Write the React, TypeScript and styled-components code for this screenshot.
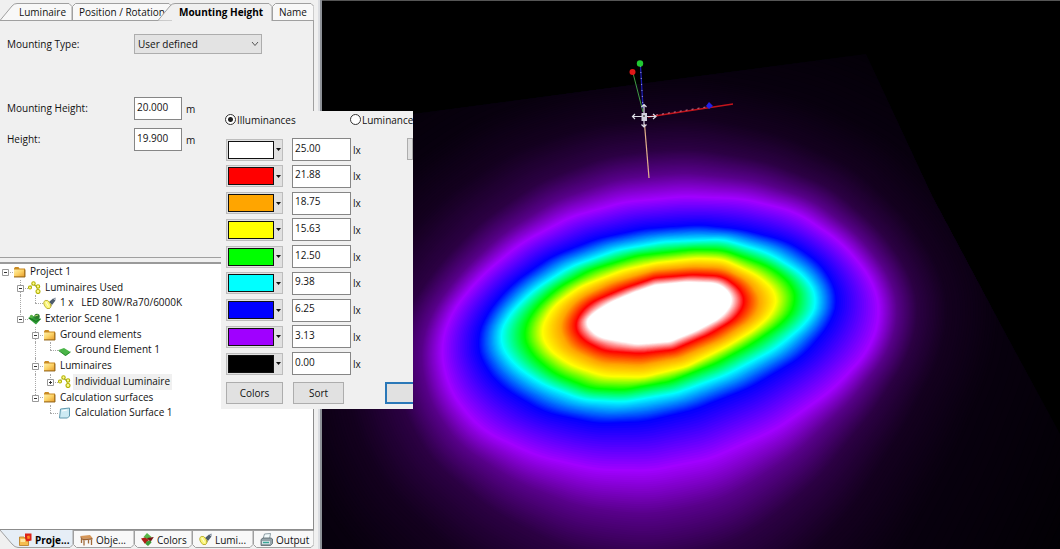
import React, { useId } from "react";
import styled, { createGlobalStyle } from "styled-components";

const GlobalStyle = createGlobalStyle`
  *, *::before, *::after { box-sizing: border-box; }
  body { margin: 0; background: #f0f0f0; }
  body, button, input, select {
    font-family: "Open Sans", "Noto Sans", sans-serif;
    font-size: 10px;
    line-height: 16px;
    color: #111;
  }
`;

const Workspace = styled.main`
  position: relative;
  display: flex;
  height: 100vh;
  min-height: 520px;
  overflow: hidden;
  background: #f0f0f0;
`;

const SidePanel = styled.aside`
  display: flex;
  flex-direction: column;
  flex: none;
  width: 322px;
  padding-right: 6px;
  border-right: 2px solid #8c9096;
  box-shadow: inset -2px 0 0 #dcdee2;
`;

/* ---------- tabs ---------- */

const TabStrip = styled.div<{ $bottom?: boolean }>`
  display: flex;
  flex: none;
  height: ${(p) => (p.$bottom ? 19 : 18)}px;
  margin-top: ${(p) => (p.$bottom ? 0 : 3)}px;
  overflow: hidden;
`;

const TabButton = styled.button<{ $width: number; $active?: boolean; $overlap?: boolean; $pad: number }>`
  position: relative;
  display: flex;
  align-items: center;
  flex: none;
  width: ${(p) => p.$width}px;
  height: 100%;
  margin: 0 ${(p) => (p.$overlap ? -14 : 0)}px 0 0;
  padding: 0 0 0 ${(p) => p.$pad}px;
  border: 0;
  background: none;
  white-space: nowrap;
  font-weight: ${(p) => (p.$active ? 700 : 400)};
  color: ${(p) => (p.$active ? "#000" : "#111")};
`;

const TabShape = styled.svg`
  position: absolute;
  inset: 0;
  width: 100%;
  height: 100%;
`;

const TabLabel = styled.span`
  position: relative;
  display: flex;
  align-items: center;
  gap: 3px;
`;

type TabProps = {
  label: string;
  width: number;
  pad: number;
  active?: boolean;
  slanted?: boolean;
  overlap?: boolean;
  bottom?: boolean;
  icon?: React.ReactNode;
};

function Tab({ label, width: w, pad, active, slanted, overlap, bottom, icon }: TabProps) {
  const fill = bottom && active ? "#e6eef6" : active ? "#f0f0f0" : "#f8f8f8";
  const outline = bottom
    ? slanted
      ? `M0 0L12 14Q15 17.500 18 17.500H${w - 3}L${w} 14.500V0`
      : `M0.500 0V14.500L3.500 17.500H${w - 3}L${w} 14.500V0`
    : slanted
      ? `M0 17.500L12 3Q14 0.500 17 0.500H${w - 3}L${w} 3.500V18`
      : `M0.500 18V3.500L3.500 0.500H${w - 3}L${w} 3.500V18`;
  const base = bottom ? `M0 0.500H${w}` : `M0 17.500H${w}`;
  return (
    <TabButton role="tab" aria-selected={!!active} $width={w} $pad={pad} $active={active} $overlap={overlap}>
      <TabShape viewBox={`0 0 ${w} ${bottom ? 19 : 18}`} aria-hidden="true">
        <path d={outline} fill={fill} stroke="#a0a0a0" />
        {!active && <path d={base} stroke="#a0a0a0" />}
      </TabShape>
      <TabLabel>
        {icon}
        {label}
      </TabLabel>
    </TabButton>
  );
}

/* ---------- property form ---------- */

const Properties = styled.form`
  display: grid;
  grid-template-columns: 127px 1fr;
  grid-template-rows: 20px 27px 23px 23px;
  row-gap: 8px;
  align-items: center;
  align-content: start;
  flex: none;
  height: 237px;
  padding: 13px 0 0 7px;
  border-right: 1px solid #a0a0a0;
  border-bottom: 1px solid #a0a0a0;
`;

const Spacer = styled.div`
  grid-column: 1 / -1;
`;

const FieldLabel = styled.label`
  padding-bottom: 2px;
`;

const Field = styled.div`
  display: flex;
  align-items: center;
  gap: 4px;
`;

const NumberBox = styled.input<{ $width: number }>`
  width: ${(p) => p.$width}px;
  height: 23px;
  padding: 0 2px 4px;
  border: 1px solid #868686;
  border-radius: 0;
  background: #fff;
  outline: 0;
`;

const SelectWrap = styled.div`
  position: relative;
  width: 128px;
  height: 20px;
`;

const Select = styled.select`
  appearance: none;
  width: 100%;
  height: 100%;
  padding: 0 20px 0 3px;
  border: 1px solid #adadad;
  border-radius: 0;
  background: #e3e3e3;
`;

const Chevron = styled.svg`
  position: absolute;
  right: 3px;
  top: 7px;
  pointer-events: none;
`;

/* ---------- project tree ---------- */

const TreePane = styled.div`
  flex: 1;
  min-height: 0;
  margin-top: 4px;
  border-top: 2px solid #9a9a9a;
  border-right: 1px solid #8c8c8c;
  border-bottom: 1px solid #8c8c8c;
  background: #fff;
`;

const Tree = styled.ul`
  display: grid;
  grid-auto-rows: 1fr;
  height: 157px;
  margin: 0;
  padding: 0;
  list-style: none;
`;

const TreeRow = styled.li`
  display: flex;
  align-items: stretch;
  white-space: pre;
`;

const Guide = styled.span<{ $kind: string }>`
  position: relative;
  flex: none;
  width: ${(p) => (p.$kind === "line" || p.$kind === "none" ? 15 : 13)}px;

  &::before {
    content: "";
    position: absolute;
    left: 5px;
    top: 0;
    height: ${(p) => (p.$kind === "elbow" ? "50%" : "100%")};
    border-left: 1px dotted ${(p) => (p.$kind === "none" || p.$kind === "root" ? "transparent" : "#a8a8a8")};
  }

  &::after {
    content: "";
    position: absolute;
    left: 5px;
    right: 0;
    top: 50%;
    border-top: 1px dotted ${(p) => (p.$kind === "line" || p.$kind === "none" ? "transparent" : "#a8a8a8")};
  }
`;

const Expander = styled.svg`
  position: absolute;
  z-index: 1;
  left: 2px;
  top: 5px;
`;

const RowIcon = styled.span`
  display: flex;
  align-items: center;
  width: 13px;
  flex: none;
`;

const RowText = styled.span<{ $selected?: boolean }>`
  margin-left: 2px;
  padding: 0 2px;
  line-height: 15px;
  background: ${(p) => (p.$selected ? "#f0f0f0" : "transparent")};
`;

const Folder = () => (
  <svg width="13" height="12" viewBox="0 0 13 12" aria-hidden="true">
    <defs>
      <linearGradient id="folder-face" x1="0" y1="0" x2="1" y2="1">
        <stop offset="0" stopColor="#fff0a8" />
        <stop offset="0.500" stopColor="#fcd367" />
        <stop offset="1" stopColor="#e8a032" />
      </linearGradient>
    </defs>
    <path d="M1 2.500L2 1H5.500L6.500 2.500H12V11H1Z" fill="#c98a22" />
    <path d="M1 3.500H11V10.500H1Z" fill="url(#folder-face)" />
    <path d="M1 11H12V3.500" fill="none" stroke="#8f6218" strokeWidth=".9" />
  </svg>
);

const Lamps = () => (
  <svg width="13" height="13" viewBox="0 0 13 13" aria-hidden="true" fill="#fdfd8c" stroke="#b3b000" strokeWidth="1.100">
    <path d="M2 6L5 3L9 6L10 10" fill="none" stroke="#8f9640" strokeDasharray="2 1" />
    <circle cx="2" cy="6.500" r="1.500" />
    <circle cx="5.500" cy="2.500" r="1.700" />
    <circle cx="10" cy="5.500" r="1.700" />
    <circle cx="10" cy="10.500" r="2" />
  </svg>
);

const Spotlight = () => (
  <svg width="13" height="13" viewBox="0 0 13 13" aria-hidden="true">
    <path d="M6 5L10 1.500L12.500 3.500L9 8Z" fill="#4e5c6c" />
    <path d="M10 1.500L12.500 0.500L12.800 3Z" fill="#8793a3" />
    <path d="M2 3.500L9 8L6.500 12Z" fill="#8f8a4a" />
    <ellipse cx="4.300" cy="7.500" rx="3" ry="4.500" transform="rotate(-28 4.300 7.500)" fill="#fbf67a" stroke="#b8ac2a" strokeWidth=".8" />
    <path d="M3 5L5.500 9.500" stroke="#fffde0" />
  </svg>
);

const Scene = () => (
  <svg width="13" height="12" viewBox="0 0 13 12" aria-hidden="true">
    <path d="M0 5L5 3L13 6L8 11.500Z" fill="#2e9b35" />
    <path d="M1 5L8 8.500L12.500 6" stroke="#146f1c" fill="none" />
    <circle cx="9" cy="3.500" r="2.700" fill="#2c7d2e" />
    <circle cx="3.500" cy="3.500" r="1.700" fill="#58b447" />
    <path d="M7 3L10 2" stroke="#b8d86a" />
  </svg>
);

const Ground = () => (
  <svg width="13" height="12" viewBox="0 0 13 12" aria-hidden="true">
    <path d="M0.500 6L6 4L12.500 8L7.500 12Z" fill="#4bb548" />
    <path d="M0.500 6.500L7.500 11.500L12.500 8" stroke="#2b8a30" fill="none" />
  </svg>
);

const Surface = () => (
  <svg width="13" height="12" viewBox="0 0 13 12" aria-hidden="true">
    <path d="M2.500 2L11.500 1V9L9.500 11H1.500Z" fill="#cdeaf3" stroke="#5f98ad" />
    <path d="M4 4L9 3" stroke="#fff" />
  </svg>
);

const ProjectIcon = () => (
  <svg width="13" height="13" viewBox="0 0 13 13" aria-hidden="true">
    <path d="M0.500 4H5L6 5.500H9.500V12.500H0.500Z" fill="#f5bd4f" stroke="#b5771c" strokeWidth=".8" />
    <path d="M1.500 6H6V9H1.500Z" fill="#ffe6a0" />
    <path d="M6 0.500H12.500V7.500L7.500 8.500L6 5Z" fill="#dc2418" />
    <path d="M8 3L10.500 2.500L11 5.500L8.500 6Z" fill="#ff8a26" />
  </svg>
);

const TableIcon = () => (
  <svg width="13" height="13" viewBox="0 0 13 13" aria-hidden="true">
    <path d="M0.500 3L10 2L12.500 5L3 6Z" fill="#d59658" />
    <path d="M3 6L12.500 5V6.500L3 7.500L0.500 4.500V3Z" fill="#9c5f2c" />
    <path d="M1.500 5V10M4 7.500V12.500M11.500 6.500V12M8.500 7V10.500" stroke="#a06a3a" strokeWidth="1.300" />
  </svg>
);

const ColorsIcon = () => (
  <svg width="13" height="13" viewBox="0 0 13 13" aria-hidden="true">
    <path d="M6 0L10.500 4L7 7L2.500 4Z" fill="#58b848" />
    <path d="M0 5.500L4 4.500L8 7L4 11Z" fill="#b01e17" />
    <path d="M6 5L12.800 4L9.500 9Z" fill="#741612" />
    <path d="M5.500 8.500L9.500 7.500L10.500 9.500L7 13L4.500 11Z" fill="#3d9a38" />
  </svg>
);

const PrinterIcon = () => (
  <svg width="13" height="13" viewBox="0 0 13 13" aria-hidden="true">
    <path d="M4.500 1L10.500 0.500L9.500 6H3Z" fill="#f2fbfc" stroke="#75878f" strokeWidth=".8" />
    <path d="M1 6.500L3 5H11L12.500 6V10.500L10.500 12.500H1Z" fill="#96a4aa" stroke="#56646a" strokeWidth=".8" />
    <path d="M2 8H10V11H2Z" fill="#d7e4e6" />
    <path d="M3 9.500H9" stroke="#3aa697" strokeWidth="1.400" />
  </svg>
);

type Node = { guides: string[]; box?: "+" | "-"; icon: React.ReactNode; text: string; selected?: boolean };

const nodes: Node[] = [
  { guides: ["root"], box: "-", icon: <Folder />, text: "Project 1" },
  { guides: ["none", "tee"], box: "-", icon: <Lamps />, text: "Luminaires Used" },
  { guides: ["none", "line", "elbow"], icon: <Spotlight />, text: "1 x   LED 80W/Ra70/6000K" },
  { guides: ["none", "elbow"], box: "-", icon: <Scene />, text: "Exterior Scene 1" },
  { guides: ["none", "none", "tee"], box: "-", icon: <Folder />, text: "Ground elements" },
  { guides: ["none", "none", "line", "elbow"], icon: <Ground />, text: "Ground Element 1" },
  { guides: ["none", "none", "tee"], box: "-", icon: <Folder />, text: "Luminaires" },
  { guides: ["none", "none", "line", "elbow"], box: "+", icon: <Lamps />, text: "Individual Luminaire", selected: true },
  { guides: ["none", "none", "elbow"], box: "-", icon: <Folder />, text: "Calculation surfaces" },
  { guides: ["none", "none", "none", "elbow"], icon: <Surface />, text: "Calculation Surface 1" },
];

/* ---------- false colour dialog ---------- */

const Dialog = styled.section`
  position: absolute;
  z-index: 2;
  left: 221px;
  top: 111px;
  width: 192px;
  height: 298px;
  padding-left: 5px;
  overflow: hidden;
  background: #f0f0f0;
`;

const RadioRow = styled.div`
  display: grid;
  grid-template-columns: 125px auto;
  height: 17px;
  margin-bottom: 10px;
  white-space: nowrap;
`;

const RadioLabel = styled.label`
  display: flex;
  align-items: center;
  gap: 1px;
`;

const Radio = styled.input`
  appearance: none;
  flex: none;
  width: 11px;
  height: 11px;
  margin: 0 0 0 -1px;
  border: 1px solid #333;
  border-radius: 50%;
  background: #fff;

  &:checked {
    background: radial-gradient(circle, #222 0 2px, #fff 3px);
  }
`;

const ScaleArea = styled.div`
  display: flex;
  justify-content: space-between;
`;

const ScaleList = styled.div`
  display: flex;
  flex-direction: column;
  justify-content: space-between;
  height: 237px;
`;

const ScaleRow = styled.div`
  display: flex;
  align-items: center;
`;

const SwatchButton = styled.button`
  display: flex;
  align-items: center;
  gap: 2px;
  width: 57px;
  height: 22px;
  margin-right: 9px;
  padding: 1px;
  border: 1px solid #bdbdbd;
  background: #e1e1e1;
`;

const Swatch = styled.span<{ $color: string }>`
  width: 46px;
  height: 18px;
  border: 1px solid #111;
  background: ${(p) => p.$color};
`;

const Unit = styled.span`
  margin-left: 2px;
`;

const PushButton = styled.button<{ $width: number; $primary?: boolean }>`
  flex: none;
  width: ${(p) => p.$width}px;
  height: 22px;
  padding: 0;
  border: ${(p) => (p.$primary ? "2px solid #2a78b8" : "1px solid #adadad")};
  background: #e1e1e1;
`;

const DialogButtons = styled.div`
  display: flex;
  gap: 10px;
  margin-top: 7px;

  & > :last-child { margin-left: 31px; }
`;

const scale = [
  ["#ffffff", "25.00"],
  ["#ff0000", "21.88"],
  ["#ffa500", "18.75"],
  ["#ffff00", "15.63"],
  ["#00ff00", "12.50"],
  ["#00ffff", "9.38"],
  ["#0000ff", "6.25"],
  ["#a000ff", "3.13"],
  ["#000000", "0.00"],
];

/* ---------- 3D view ---------- */

const Viewport = styled.div`
  flex: 1;
  min-width: 0;
  background: #000;
  border-top: 1px solid #555;
`;

const Drawing = styled.svg`
  display: block;
  width: 100%;
  height: 100%;
`;

type Pt = [number, number];
type Rgb = [number, number, number];

const CENTER: Pt = [753, 432];
const SAMPLES = 180;

/* Iso-lux outlines in thirds of a pixel, from the brightest level outwards. */
const outlines: { color: Rgb; pts: Pt[] }[] = [
  { color: [255, 255, 255], pts: [[524, 462], [540, 436], [600, 398], [670, 368], [735, 345], [830, 336], [925, 340], [960, 368], [968, 400], [934, 442], [860, 482], [780, 515], [680, 523], [565, 502]] },
  { color: [255, 0, 0], pts: [[492, 470], [510, 428], [545, 396], [640, 355], [735, 323], [850, 314], [940, 319], [992, 358], [1007, 400], [975, 447], [900, 492], [790, 540], [690, 551], [580, 543], [515, 508]] },
  { color: [255, 165, 0], pts: [[446, 472], [470, 420], [510, 382], [600, 338], [735, 299], [850, 289], [940, 292], [1020, 335], [1055, 390], [1035, 442], [940, 508], [810, 565], [690, 588], [570, 581], [475, 535]] },
  { color: [255, 255, 0], pts: [[390, 478], [430, 408], [510, 350], [640, 300], [740, 278], [860, 265], [940, 268], [1050, 320], [1102, 370], [1095, 422], [1040, 475], [950, 530], [830, 590], [700, 622], [580, 619], [480, 585], [410, 535]] },
  { color: [0, 255, 0], pts: [[336, 488], [370, 420], [440, 355], [540, 300], [680, 257], [850, 238], [940, 240], [1080, 290], [1150, 345], [1160, 400], [1130, 450], [1030, 520], [920, 580], [780, 635], [640, 660], [540, 655], [430, 610], [360, 550]] },
  { color: [0, 255, 255], pts: [[263, 512], [290, 440], [370, 360], [480, 290], [620, 240], [760, 215], [940, 208], [1080, 250], [1190, 320], [1226, 390], [1200, 450], [1100, 535], [950, 615], [800, 670], [640, 697], [520, 690], [400, 645], [310, 585]] },
  { color: [0, 0, 255], pts: [[197, 515], [225, 435], [300, 345], [420, 260], [560, 205], [700, 175], [870, 163], [1000, 178], [1140, 215], [1240, 285], [1288, 380], [1265, 460], [1180, 560], [1020, 655], [850, 722], [700, 757], [560, 762], [400, 727], [270, 650], [215, 580]] },
  { color: [160, 0, 255], pts: [[88, 540], [120, 430], [210, 320], [330, 220], [480, 140], [640, 95], [820, 78], [1000, 85], [1160, 125], [1300, 220], [1390, 330], [1415, 430], [1380, 540], [1270, 660], [1100, 780], [900, 870], [720, 905], [560, 902], [380, 860], [210, 780], [120, 670]] },
];

/* Fade beyond the last outline: distance added to the right, bottom, left and top. */
const halo: { color: Rgb; reach: [number, number, number, number] }[] = [
  { color: [88, 0, 138], reach: [18, 44, 20, 24] },
  { color: [44, 0, 68], reach: [38, 90, 45, 48] },
  { color: [20, 0, 31], reach: [68, 150, 95, 80] },
  { color: [8, 0, 14], reach: [120, 230, 150, 120] },
  { color: [2, 0, 4], reach: [250, 400, 280, 210] },
];

const angleAt = (i: number) => (i / SAMPLES) * Math.PI * 2;

function radiiOf(pts: Pt[]): number[] {
  const raw = Array.from({ length: SAMPLES }, (_, i) => {
    const dx = Math.cos(angleAt(i));
    const dy = Math.sin(angleAt(i));
    let best = 0;
    pts.forEach((a, k) => {
      const b = pts[(k + 1) % pts.length];
      const ax = a[0] - CENTER[0];
      const ay = a[1] - CENTER[1];
      const ex = b[0] - a[0];
      const ey = b[1] - a[1];
      const det = dx * ey - dy * ex;
      if (Math.abs(det) < 1e-6) return;
      const r = (ax * ey - ay * ex) / det;
      const t = (ax * dy - ay * dx) / det;
      if (r > 0 && t >= 0 && t <= 1) best = Math.max(best, r);
    });
    return best / 3;
  });
  const reach = 2;
  return raw.map((_, i) => {
    let sum = 0;
    for (let k = -reach; k <= reach; k++) sum += raw[(i + k + SAMPLES) % SAMPLES];
    return sum / (reach * 2 + 1);
  });
}

function outlinePath(radii: number[]) {
  const pts = radii.map((r, i) => {
    const x = CENTER[0] / 3 + 410 + Math.cos(angleAt(i)) * r;
    const y = CENTER[1] / 3 + 170 + Math.sin(angleAt(i)) * r;
    return `${x.toFixed(1)} ${y.toFixed(1)}`;
  });
  return `M${pts.join("L")}Z`;
}

function buildBands() {
  const levels = outlines.map((o) => ({ color: o.color, radii: radiiOf(o.pts) }));
  const edge = levels[levels.length - 1].radii;
  halo.forEach(({ color, reach }) => {
    levels.push({
      color,
      radii: edge.map((r, i) => {
        const c = Math.cos(angleAt(i));
        const s = Math.sin(angleAt(i));
        return r + c * c * (c > 0 ? reach[0] : reach[2]) + s * s * (s > 0 ? reach[1] : reach[3]);
      }),
    });
  });
  const bands: { d: string; fill: string }[] = [];
  const steps = 20;
  for (let n = levels.length - 1; n > 0; n--) {
    const outer = levels[n];
    const inner = levels[n - 1];
    for (let k = 0; k < steps; k++) {
      const t = k / steps;
      const rgb = outer.color.map((c, j) => Math.round(c + (inner.color[j] - c) * t));
      bands.push({
        d: outlinePath(outer.radii.map((r, i) => r + (inner.radii[i] - r) * t)),
        fill: `rgb(${rgb.join(",")})`,
      });
    }
  }
  bands.push({ d: outlinePath(levels[0].radii), fill: "#fff" });
  return bands;
}

const bands = buildBands();

function LightScene() {
  const clip = useId();
  return (
    <Drawing viewBox="322 1 738 548" preserveAspectRatio="xMidYMid slice" role="img" aria-label="False colour rendering">
      <clipPath id={clip}>
        <path d="M322 125L413 114L866 54L932 196L1003 329L1060 434V549H322Z" />
      </clipPath>
      <g clipPath={`url(#${clip})`}>
        <path d="M322 0H1060V549H322Z" fill="#020004" />
        {bands.map((b, i) => (
          <path key={i} d={b.d} fill={b.fill} />
        ))}
      </g>
      <g fill="none" strokeWidth="1">
        <path d="M633 73L643 112" stroke="#3f9b45" />
        <path d="M640.500 66L643 108" stroke="#1c1cae" strokeWidth="1.300" />
        <path d="M640.500 66L643 108" stroke="#9ba0e8" strokeDasharray="1 5" />
        <path d="M648 117L733 104" stroke="#c3141c" strokeWidth="1.400" />
        <path d="M656 115L706 107" stroke="#e890a8" strokeDasharray="2 4" strokeWidth=".8" />
        <path d="M644.500 124L649 178" stroke="#e2b08c" strokeWidth="1.200" />
      </g>
      <circle cx="632.500" cy="72" r="3" fill="#e01818" />
      <circle cx="640" cy="63.500" r="3.200" fill="#20c832" />
      <path d="M706 106L709 102L713 106L709 109Z" fill="#2020e8" />
      <g stroke="#dcdce6" strokeWidth="1.200" fill="none">
        <path d="M632.500 116.500H656M635 114L632.500 116.500L635 119M653 114L656 116.500L653 119" />
        <path d="M644 104V127M641.500 107L644 104.500L646.500 107M641.500 124.500L644 127L646.500 124.500" />
      </g>
      <path d="M641.500 113H647V121H641.500Z" fill="#d0d0dc" />
      <path d="M643 115H645V117H643Z" fill="#777" />
    </Drawing>
  );
}

export default function App() {
  return (
    <>
      <GlobalStyle />
      <Workspace>
        <SidePanel>
          <TabStrip role="tablist">
            <Tab label="Luminaire" width={72} pad={19} slanted />
            <Tab label="Position / Rotation" width={100} pad={7} overlap />
            <Tab label="Mounting Height" width={114} pad={21} slanted active />
            <Tab label="Name" width={42} pad={7} />
          </TabStrip>
          <Properties>
            <label htmlFor="mounting-type">Mounting Type:</label>
            <SelectWrap>
              <Select id="mounting-type" defaultValue="user">
                <option value="user">User defined</option>
              </Select>
              <Chevron width="8" height="6" viewBox="0 0 8 6" aria-hidden="true">
                <path d="M1 1L4 4.500L7 1" fill="none" stroke="#555" />
              </Chevron>
            </SelectWrap>
            <Spacer />
            <FieldLabel htmlFor="mounting-height">Mounting Height:</FieldLabel>
            <Field>
              <NumberBox id="mounting-height" $width={48} defaultValue="20.000" />
              <span>m</span>
            </Field>
            <FieldLabel htmlFor="height">Height:</FieldLabel>
            <Field>
              <NumberBox id="height" $width={48} defaultValue="19.900" />
              <span>m</span>
            </Field>
          </Properties>
          <TreePane>
            <Tree role="tree">
              {nodes.map((n) => (
                <TreeRow key={n.text} role="treeitem" aria-selected={!!n.selected}>
                  {n.guides.map((kind, i) => (
                    <Guide key={i} $kind={kind}>
                      {n.box && i === n.guides.length - 1 && (
                        <Expander width="7" height="7" viewBox="0 0 7 7" aria-hidden="true">
                          <path d="M0.500 0.500H6.500V6.500H0.500Z" fill="#fff" stroke="#999" />
                          <path d={n.box === "+" ? "M2 3.500H5M3.500 2V5" : "M2 3.500H5"} stroke="#333" />
                        </Expander>
                      )}
                    </Guide>
                  ))}
                  <RowIcon>{n.icon}</RowIcon>
                  <RowText $selected={n.selected}>{n.text}</RowText>
                </TreeRow>
              ))}
            </Tree>
          </TreePane>
          <TabStrip role="tablist" $bottom>
            <Tab bottom slanted active label="Proje..." width={73} pad={19} icon={<ProjectIcon />} />
            <Tab bottom label="Obje..." width={61} pad={7} icon={<TableIcon />} />
            <Tab bottom label="Colors" width={58} pad={7} icon={<ColorsIcon />} />
            <Tab bottom label="Lumi..." width={61} pad={7} icon={<Spotlight />} />
            <Tab bottom label="Output" width={61} pad={7} icon={<PrinterIcon />} />
          </TabStrip>
        </SidePanel>

        <Viewport>
          <LightScene />
        </Viewport>

        <Dialog aria-label="False colours">
          <RadioRow>
            <RadioLabel>
              <Radio type="radio" name="quantity" defaultChecked />
              Illuminances
            </RadioLabel>
            <RadioLabel>
              <Radio type="radio" name="quantity" />
              Luminance
            </RadioLabel>
          </RadioRow>
          <ScaleArea>
            <ScaleList>
              {scale.map(([color, value]) => (
                <ScaleRow key={value}>
                  <SwatchButton aria-label={`Colour for ${value} lx`}>
                    <Swatch $color={color} />
                    <svg width="5" height="3" viewBox="0 0 5 3" aria-hidden="true">
                      <path d="M0 0H5L2.500 3Z" fill="#111" />
                    </svg>
                  </SwatchButton>
                  <NumberBox $width={59} defaultValue={value} aria-label={`${value} lx`} />
                  <Unit>lx</Unit>
                </ScaleRow>
              ))}
            </ScaleList>
            <PushButton $width={6} aria-label="More" />
          </ScaleArea>
          <DialogButtons>
            <PushButton $width={57}>Colors</PushButton>
            <PushButton $width={51}>Sort</PushButton>
            <PushButton $width={70} $primary aria-label="Apply" />
          </DialogButtons>
        </Dialog>
      </Workspace>
    </>
  );
}
